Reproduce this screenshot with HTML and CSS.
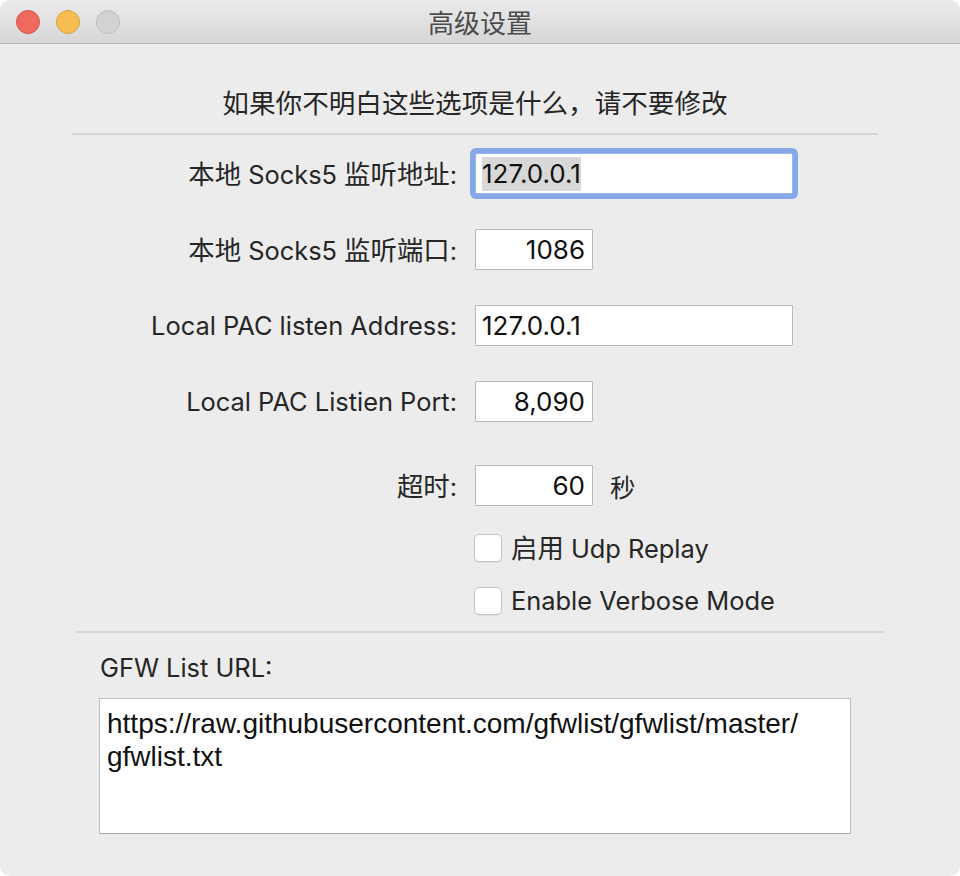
FILE: index.html
```html
<!DOCTYPE html>
<html lang="zh">
<head>
<meta charset="utf-8">
<title>高级设置</title>
<link rel="stylesheet" href="styles.css">
</head>
<body>
<div class="window">
  <div class="titlebar">
    <div class="lights">
      <span class="light red"></span>
      <span class="light yellow"></span>
      <span class="light gray"></span>
    </div>
    <div class="title">高级设置</div>
  </div>
  <div class="content">
    <p class="notice">如果你不明白这些选项是什么，请不要修改</p>
    <hr class="sep sep-top">
    <div class="form">
      <label class="label"><span class="cjk">本地</span> Socks5 <span class="cjk">监听地址</span>:</label>
      <div class="field wide focused"><span class="sel">127.0.0.1</span></div>

      <label class="label"><span class="cjk">本地</span> Socks5 <span class="cjk">监听端口</span>:</label>
      <div class="field narrow num">1086</div>

      <label class="label">Local PAC listen Address:</label>
      <div class="field wide">127.0.0.1</div>

      <label class="label">Local PAC Listien Port:</label>
      <div class="field narrow num">8,090</div>

      <label class="label timeout-label"><span class="cjk">超时</span>:</label>
      <div class="timeout-cell"><div class="field narrow num">60</div><span class="unit">秒</span></div>
    </div>
    <div class="checks">
      <div class="check"><span class="box"></span><span><span class="cjk">启用</span> Udp Replay</span></div>
      <div class="check"><span class="box"></span><span>Enable Verbose Mode</span></div>
    </div>
    <hr class="sep sep-bottom">
    <div class="gfw">
      <div class="gfw-label">GFW List URL:</div>
      <div class="textarea">https://raw.githubusercontent.com/gfwlist/gfwlist/master/<br>gfwlist.txt</div>
    </div>
  </div>
</div>
</body>
</html>
```
FILE: styles.css
```css
html, body {
  margin: 0;
  padding: 0;
  background: #ffffff;
}
body {
  font-family: "Inter", "Noto Sans CJK SC", sans-serif;
  font-size: 25.4px;
  color: #262626;
}
.cjk {
  font-family: "Noto Sans CJK SC", sans-serif;
  font-size: 26.4px;
}
.window {
  width: 960px;
  height: 876px;
  background: #ececec;
  border-radius: 10px;
  overflow: hidden;
  display: flex;
  flex-direction: column;
}
.titlebar {
  height: 43px;
  flex: none;
  background: linear-gradient(#ebebeb, #d6d6d6);
  border-bottom: 1px solid #b4b4b4;
  display: flex;
  align-items: center;
  position: relative;
}
.lights {
  display: flex;
  gap: 16px;
  padding-left: 16px;
}
.light {
  width: 22px;
  height: 22px;
  border-radius: 50%;
  border: 1px solid;
}
.red { background: #ee6a5f; border-color: #d5534b; }
.yellow { background: #f6be50; border-color: #d9a241; }
.gray { background: #d2d2d2; border-color: #bdbdbd; }
.title {
  position: absolute;
  left: 0;
  right: 0;
  text-align: center;
  font-family: "Noto Sans CJK SC", sans-serif;
  font-size: 26px;
  color: #4b4b4b;
  line-height: 43px;
}
.content {
  display: flex;
  flex-direction: column;
}
.notice {
  margin: 42px 0 0;
  line-height: 32px;
  text-align: center;
  padding-right: 10px;
  font-family: "Noto Sans CJK SC", sans-serif;
  font-size: 26.6px;
}
.sep {
  border: none;
  height: 2px;
  background: #d6d6d6;
  margin: 0;
}
.sep-top {
  margin: 15px 82px 0 72px;
}
.form {
  display: grid;
  grid-template-columns: 457px auto;
  column-gap: 18px;
  row-gap: 35px;
  align-items: center;
  margin-top: 18px;
}
.label {
  text-align: right;
  line-height: 32px;
  white-space: nowrap;
}
.field {
  box-sizing: border-box;
  height: 41px;
  background: #fff;
  border: 1px solid #b9b9b9;
  border-radius: 1px;
  line-height: 39px;
  padding: 0 6px;
  color: #111;
  font-size: 26px;
}
.wide { width: 318px; }
.narrow { width: 118px; }
.num { text-align: right; padding-right: 7px; }
.focused {
  border-color: #9db6e6;
  box-shadow: 0 0 0 5px #86a8e9;
  border-radius: 2px;
}
.sel {
  background: #d8d8d8;
  display: inline-block;
  line-height: 34px;
  vertical-align: middle;
  margin-top: -3px;
}
.timeout-label { margin-top: 8px; }
.timeout-cell {
  display: flex;
  align-items: center;
  margin-top: 8px;
}
.unit {
  margin-left: 17px;
  font-family: "Noto Sans CJK SC", sans-serif;
}
.checks {
  display: flex;
  flex-direction: column;
  gap: 25px;
  margin-top: 28px;
  padding-left: 474px;
}
.check {
  display: flex;
  align-items: center;
  gap: 9px;
  height: 28px;
  line-height: 32px;
}
.box {
  box-sizing: border-box;
  width: 28px;
  height: 28px;
  background: #fff;
  border: 1px solid #c4c4c4;
  border-radius: 5px;
  box-shadow: 0 1px 1px rgba(0,0,0,0.06);
}
.sep-bottom {
  margin: 16px 76px 0 76px;
}
.gfw {
  padding-left: 99px;
}
.gfw-label {
  margin-top: 19px;
  padding-left: 1px;
  line-height: 32px;
}
.textarea {
  box-sizing: border-box;
  margin-top: 14px;
  width: 752px;
  height: 136px;
  background: #fff;
  border: 1px solid #bdbdbd;
  border-bottom-color: #a9a9a9;
  padding: 8px 7px;
  font-family: "Liberation Sans", "Inter", sans-serif;
  font-size: 28px;
  line-height: 33px;
  color: #111;
}
```
